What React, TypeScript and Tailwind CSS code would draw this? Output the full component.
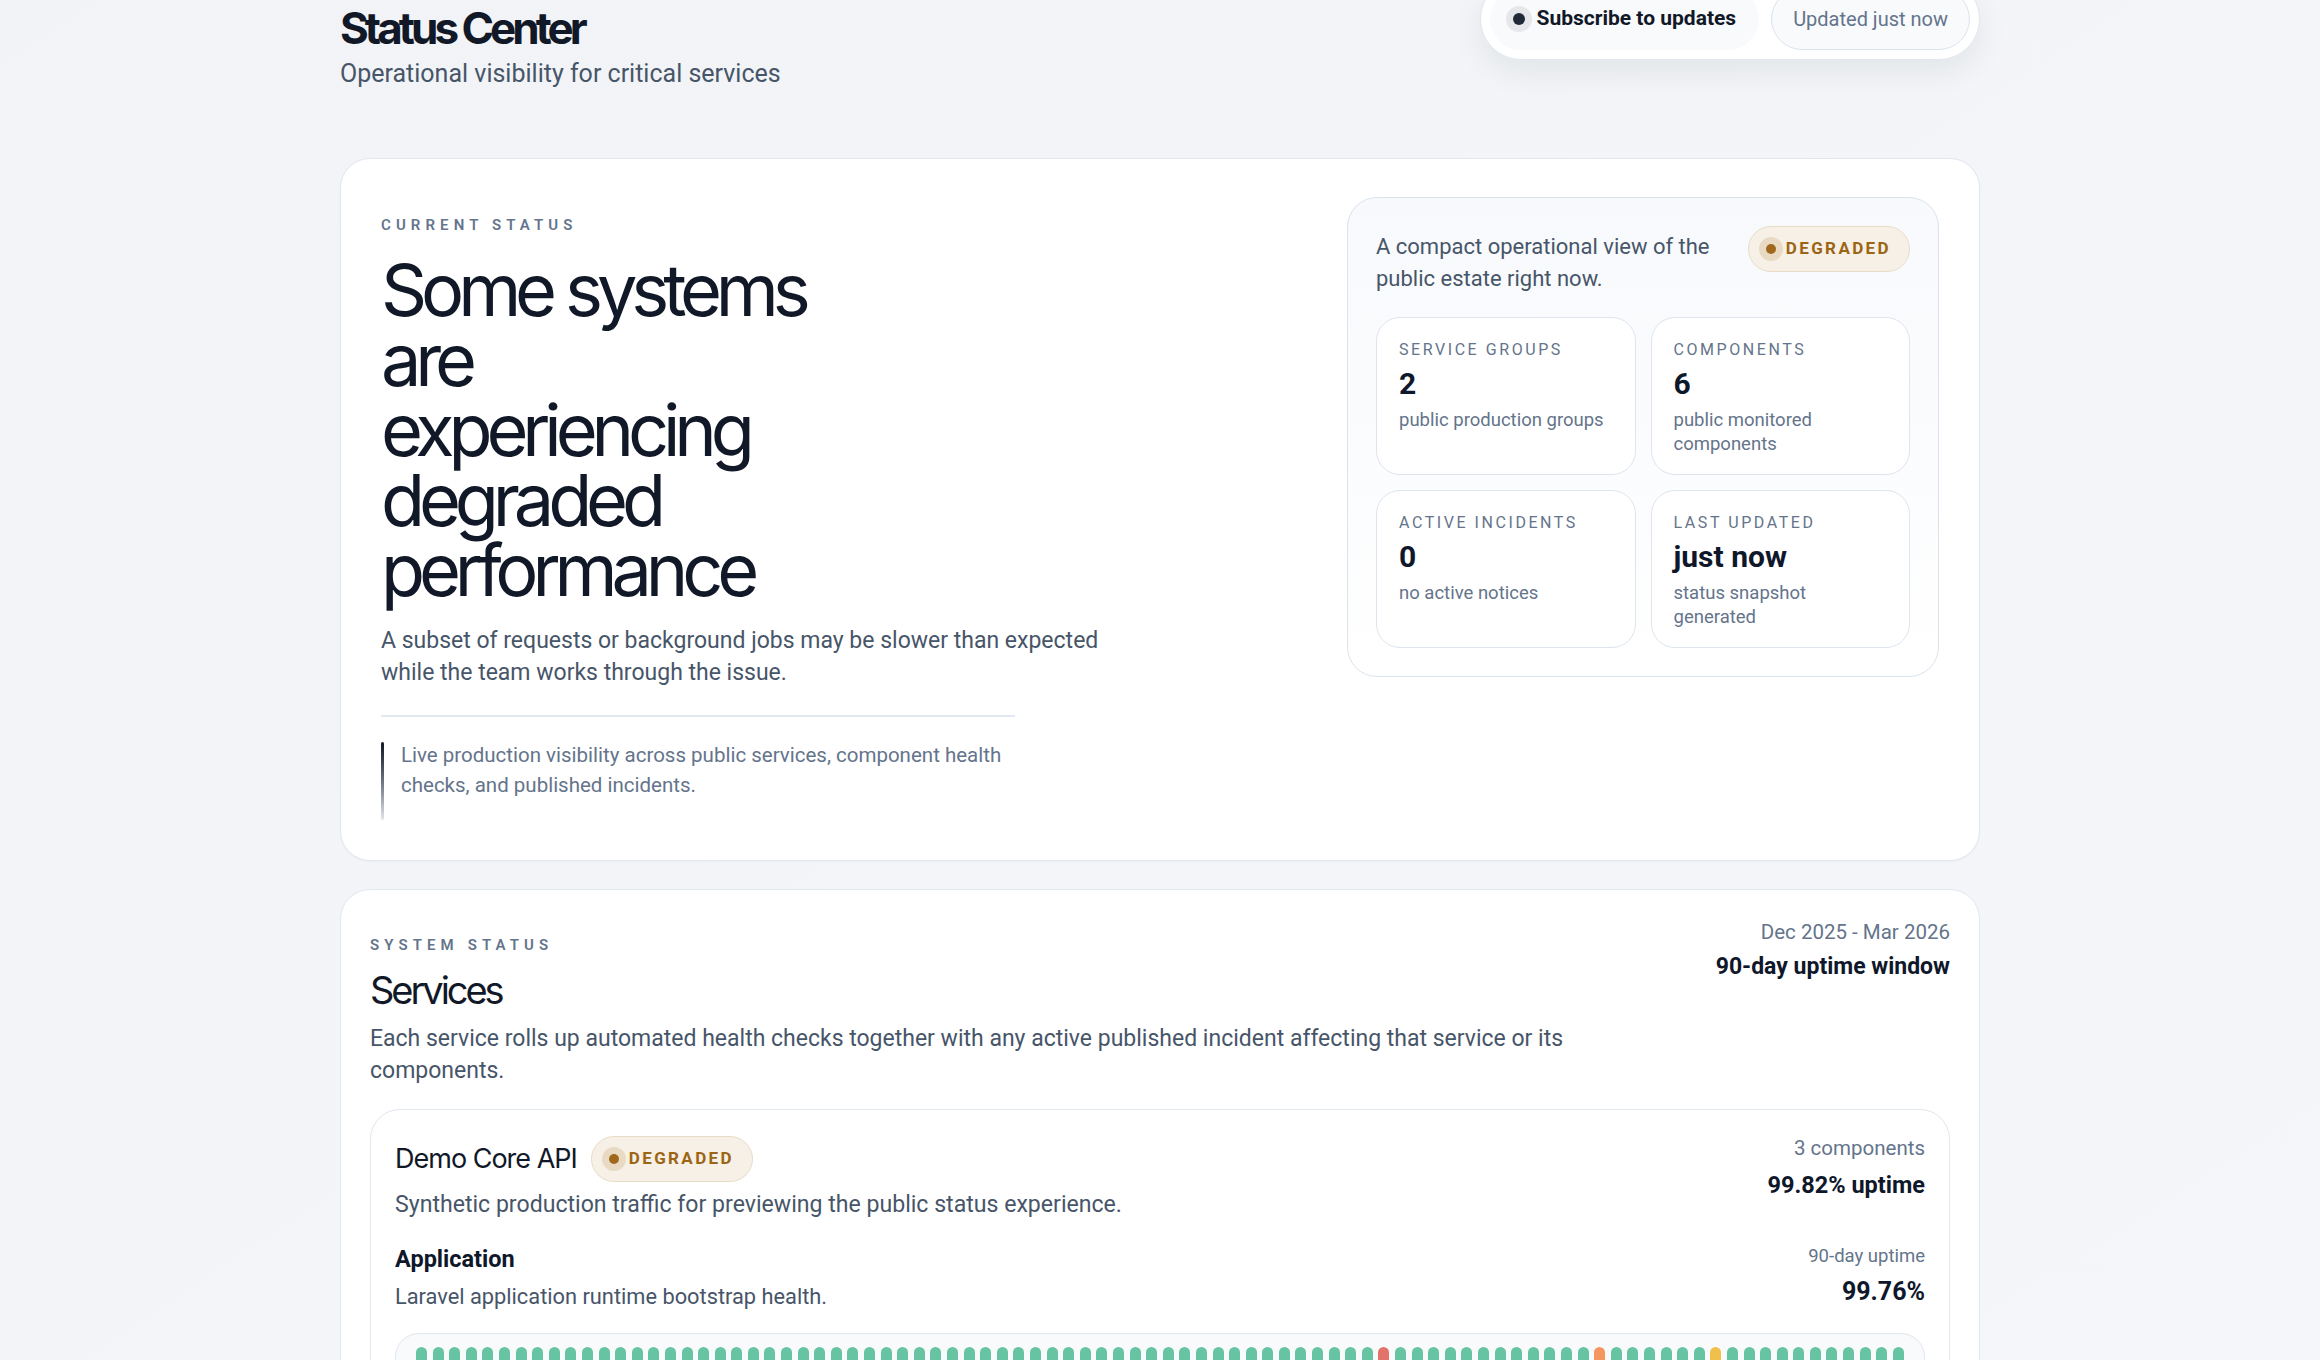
import React from "react";

const inter = "font-['Inter','Noto_Sans',sans-serif]";

function Badge() {
  return (
    <span className="inline-flex h-[46px] items-center rounded-full border border-[#e8dcc7] bg-[#f6f0e6] pl-[10px] pr-[18px]">
      <span className="flex h-[24px] w-[24px] items-center justify-center rounded-full bg-[#e9dac3]">
        <span className="h-[10px] w-[10px] rounded-full bg-[#a0681b]" />
      </span>
      <span className="ml-[3px] text-[17px] font-bold uppercase tracking-[0.14em] text-[#9c6514]">
        Degraded
      </span>
    </span>
  );
}

function Stat({ label, value, desc }: { label: string; value: string; desc: string }) {
  return (
    <div className="h-[158px] rounded-[24px] border border-[#dfe5ee] bg-white px-[22px] pt-[20px]">
      <div className="text-[16px] font-normal uppercase leading-[24px] tracking-[0.16em] text-[#64748b]">
        {label}
      </div>
      <div className="mt-[4px] text-[30px] font-bold leading-[36px] text-[#0f172a]">{value}</div>
      <div className="mt-[6px] text-[18.5px] leading-[24px] text-[#64748b]">{desc}</div>
    </div>
  );
}

const pillColor = (i: number) => {
  if (i === 58) return "bg-[#e2736b]";
  if (i === 71) return "bg-[#f4965f]";
  if (i === 78) return "bg-[#f1c04c]";
  return "bg-[#66c4a2]";
};

export default function App() {
  const pills = Array.from({ length: 90 }, (_, i) => i);
  return (
    <div className="min-h-screen overflow-hidden bg-gradient-to-br from-[#f1f3f6] via-[#f3f5f8] to-[#f4f6f9] font-['Roboto','Liberation_Sans',sans-serif] text-[#0f172a]">
      <div className="mx-auto w-[1640px] pb-[60px]">
        {/* Header */}
        <div className="flex items-start justify-between">
          <div className="pt-[4px]">
            <h1 className={`${inter} text-[44px] font-bold leading-[48px] tracking-[-0.09em] text-[#111827]`}>
              Status Center
            </h1>
            <p className="mt-[6px] text-[25px] leading-[32px] text-[#475569]">
              Operational visibility for critical services
            </p>
          </div>
          <div className="-mt-[22px] flex items-center gap-[12px] rounded-full border border-[#e2e8f0] bg-white p-[9px] shadow-[0_12px_32px_rgba(15,23,42,0.07)]">
            <div className="flex h-[62px] items-center rounded-full bg-[#f9fafb] pl-[16px] pr-[23px]">
              <span className="flex h-[26px] w-[26px] items-center justify-center rounded-full bg-[#e5e7eb]">
                <span className="h-[12px] w-[12px] rounded-full bg-[#1f2937]" />
              </span>
              <span className="ml-[4px] text-[21px] font-bold text-[#111827]">Subscribe to updates</span>
            </div>
            <div className="flex h-[62px] items-center rounded-full border border-[#dde3ec] bg-[#f8fafc] px-[21px] text-[20px] text-[#64748b]">
              Updated just now
            </div>
          </div>
        </div>

        {/* Hero card */}
        <div className="mt-[68px] flex items-start justify-between rounded-[30px] border border-[#e1e7ef] bg-white p-[40px] shadow-[0_1px_2px_rgba(15,23,42,0.03)]">
          <div className="pt-[14px]">
            <div className="text-[15px] font-semibold uppercase leading-[24px] tracking-[0.34em] text-[#64748b]">
              Current status
            </div>
            <h2 className={`${inter} mt-[18px] w-[470px] text-[72px] font-normal leading-[70px] tracking-[-0.085em] text-[#111827]`}>
              Some systems are experiencing degraded performance
            </h2>
            <p className="mt-[20px] max-w-[745px] text-[23px] leading-[32px] text-[#475569]">
              A subset of requests or background jobs may be slower than expected while the team works through the issue.
            </p>
            <div className="mt-[26px] h-[2px] w-[634px] bg-[#e2e8f0]" />
            <div className="mt-[25px] flex w-[634px] gap-[17px]">
              <div className="w-[3px] shrink-0 rounded-full bg-gradient-to-b from-[#111827] via-[#6b7280] to-[#e5e7eb]" />
              <p className="-mt-[2px] pb-[20px] text-[20.5px] leading-[30px] text-[#64748b]">
                Live production visibility across public services, component health checks, and published incidents.
              </p>
            </div>
          </div>

          <div className="-mt-[2px] w-[592px] rounded-[30px] border border-[#dbe3ed] bg-gradient-to-b from-[#f7f9fc] to-white p-[28px]">
            <div className="flex items-start justify-between gap-[20px]">
              <p className="mt-[5px] text-[22px] leading-[32px] text-[#475569]">
                A compact operational view of the public estate right now.
              </p>
              <div className="shrink-0">
                <Badge />
              </div>
            </div>
            <div className="mt-[22px] grid grid-cols-2 gap-[15px]">
              <Stat label="Service groups" value="2" desc="public production groups" />
              <Stat label="Components" value="6" desc="public monitored components" />
              <Stat label="Active incidents" value="0" desc="no active notices" />
              <Stat label="Last updated" value="just now" desc="status snapshot generated" />
            </div>
          </div>
        </div>

        {/* Services card */}
        <div className="mt-[28px] rounded-[30px] border border-[#e1e7ef] bg-white px-[29px] pt-[28px] pb-[40px]">
          <div className="flex items-start justify-between">
            <div className="mt-[15px]">
              <div className="text-[15px] font-semibold uppercase leading-[24px] tracking-[0.34em] text-[#64748b]">
                System status
              </div>
              <h2 className={`${inter} mt-[9px] text-[38px] font-normal leading-[48px] tracking-[-0.08em] text-[#111827]`}>
                Services
              </h2>
              <p className="mt-[9px] max-w-[1220px] text-[23px] leading-[32px] text-[#475569]">
                Each service rolls up automated health checks together with any active published incident affecting that service or its components.
              </p>
            </div>
            <div className="text-right">
              <div className="text-[20.5px] leading-[28px] text-[#64748b]">Dec 2025 - Mar 2026</div>
              <div className="mt-[6px] text-[23px] font-bold leading-[30px] text-[#0f172a]">90-day uptime window</div>
            </div>
          </div>

          <div className="mt-[22px] rounded-[30px] border border-[#e1e7ef] bg-white px-[24px] pt-[26px] pb-[24px]">
            <div className="flex items-start justify-between">
              <div>
                <div className="flex items-center gap-[14px]">
                  <span className={`${inter} text-[27px] leading-[36px] tracking-[-0.037em] text-[#111827]`}>Demo Core API</span>
                  <Badge />
                </div>
                <p className="mt-[7px] text-[23.1px] leading-[32px] text-[#475569]">
                  Synthetic production traffic for previewing the public status experience.
                </p>
              </div>
              <div className="-mt-[2px] text-right">
                <div className="text-[20.5px] leading-[28px] text-[#64748b]">3 components</div>
                <div className="mt-[7px] text-[23.5px] font-bold leading-[32px] text-[#0f172a]">99.82% uptime</div>
              </div>
            </div>

            <div className="mt-[22px] flex items-start justify-between">
              <div>
                <div className="text-[23.5px] font-bold leading-[32px] text-[#0f172a]">Application</div>
                <p className="mt-[7px] text-[21.8px] leading-[30px] text-[#475569]">
                  Laravel application runtime bootstrap health.
                </p>
              </div>
              <div className="text-right">
                <div className="text-[18.5px] leading-[26px] text-[#64748b]">90-day uptime</div>
                <div className="mt-[7px] text-[25px] font-bold leading-[32px] text-[#0f172a]">99.76%</div>
              </div>
            </div>

            <div className="mt-[21px] rounded-[24px] border border-[#e1e7ef] bg-[#f8fafc] px-[20px] pt-[13px] pb-[20px]">
              <div className="flex justify-between">
                {pills.map((i) => (
                  <span key={i} className={`h-[40px] w-[11px] rounded-full ${pillColor(i)}`} />
                ))}
              </div>
            </div>
          </div>
        </div>
      </div>
    </div>
  );
}
